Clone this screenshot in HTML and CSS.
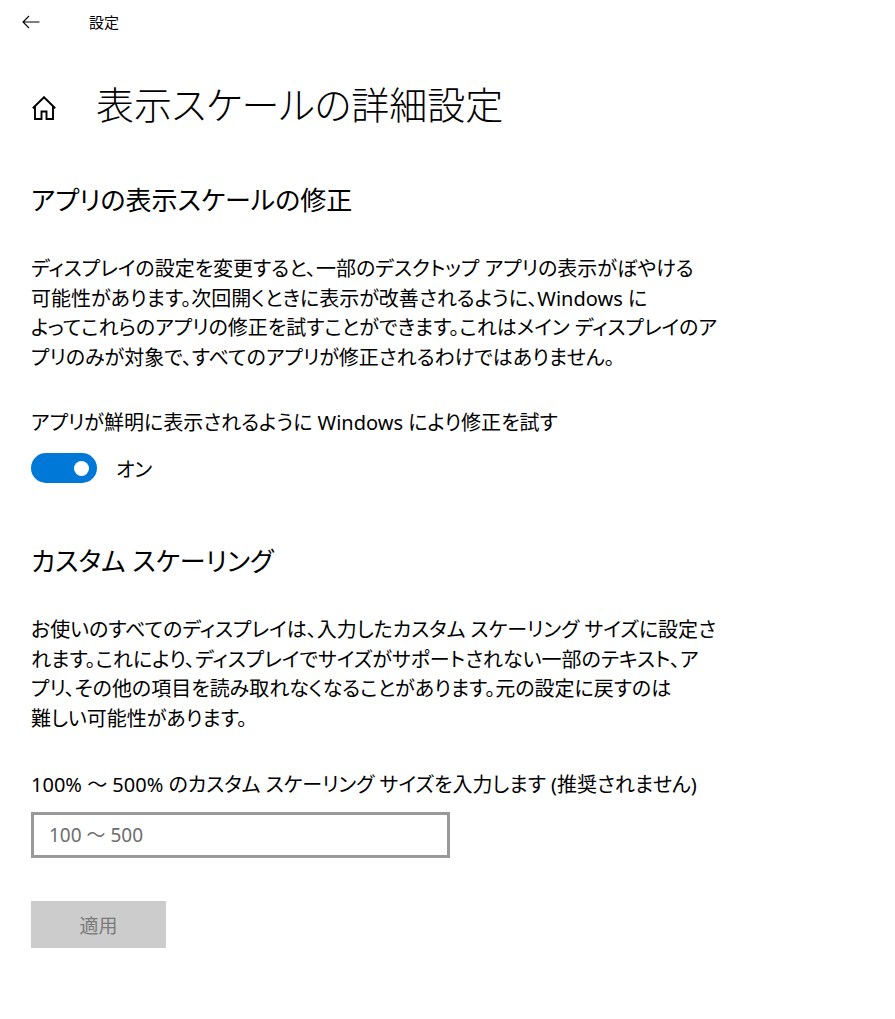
FILE: index.html
```html
<!DOCTYPE html>
<html lang="ja">
<head>
    <meta charset="UTF-8">
    <title>設定</title>
    <link rel="stylesheet" href="styles.css">
</head>
<body>
    <div class="topbar">
        <svg class="back-icon" width="18" height="14" viewBox="0 0 18 14">
            <path d="M17.5 7H1M7 1L1 7l6 6" fill="none" stroke="#000" stroke-width="1.1"/>
        </svg>
        <span class="app-name">設定</span>
    </div>

    <div class="page-title">
        <svg class="home-icon" width="24" height="24" viewBox="0 0 24 24">
            <path d="M0.8 12.2L12 1.2l11.2 11M3 10v13h6.5v-7.5h5V23H21V10" fill="none" stroke="#000" stroke-width="1.9" stroke-linejoin="miter"/>
        </svg>
        <h1>表示スケールの詳細設定</h1>
    </div>

    <div class="content">
        <h2 class="section-title first">アプリの表示スケールの修正</h2>
        <p class="desc">ディスプレイの設定を変更すると、一部のデスクトップ アプリの表示がぼやける<br>可能性があります。次回開くときに表示が改善されるように、Windows に<br>よってこれらのアプリの修正を試すことができます。これはメイン ディスプレイのア<br>プリのみが対象で、すべてのアプリが修正されるわけではありません。</p>

        <div class="field-label">アプリが鮮明に表示されるように Windows により修正を試す</div>
        <div class="toggle-row">
            <span class="toggle on"><span class="thumb"></span></span>
            <span class="toggle-text">オン</span>
        </div>

        <h2 class="section-title">カスタム スケーリング</h2>
        <p class="desc">お使いのすべてのディスプレイは、入力したカスタム スケーリング サイズに設定さ<br>れます。これにより、ディスプレイでサイズがサポートされない一部のテキスト、ア<br>プリ、その他の項目を読み取れなくなることがあります。元の設定に戻すのは<br>難しい可能性があります。</p>

        <div class="field-label second">100% ～ 500% のカスタム スケーリング サイズを入力します (推奨されません)</div>
        <input class="scale-input" type="text" placeholder="100 ～ 500">

        <button class="apply-btn" disabled>適用</button>
    </div>
</body>
</html>
```

FILE: styles.css
```css
body {
    margin: 0;
    background-color: #fff;
    color: #000;
    font-family: "Noto Sans", "Noto Sans CJK JP", sans-serif;
    font-feature-settings: "palt";
}
.topbar {
    height: 44px;
    display: flex;
    align-items: center;
}
.back-icon {
    margin-left: 22px;
}
.app-name {
    margin-left: 49px;
    font-size: 15px;
    line-height: 20px;
}
.page-title {
    display: flex;
    align-items: center;
    height: 50px;
    margin-top: 35px;
}
.home-icon {
    margin: 7px 0 0 32px;
}
h1 {
    margin: 0 0 0 40px;
    font-size: 38px;
    font-weight: 300;
    line-height: 50px;
}
.content {
    padding-left: 31px;
}
.section-title {
    margin: 60px 0 0;
    font-size: 26px;
    font-weight: 400;
    line-height: 36px;
}
.section-title.first {
    margin-top: 53px;
}
.desc {
    margin: 35px 0 0;
    font-size: 20px;
    line-height: 29.5px;
}
.section-title + .desc {
    margin-top: 36px;
}
.field-label {
    margin-top: 36px;
    font-size: 20px;
    line-height: 29px;
}
.field-label.second {
    margin-top: 37px;
}
.toggle-row {
    display: flex;
    align-items: center;
    margin-top: 16px;
    height: 30px;
}
.toggle {
    width: 66px;
    height: 30px;
    border-radius: 15px;
    background-color: #0078d7;
    position: relative;
}
.toggle .thumb {
    position: absolute;
    right: 8px;
    top: 7.5px;
    width: 15px;
    height: 15px;
    border-radius: 50%;
    background-color: #fff;
}
.toggle-text {
    margin-left: 19px;
    font-size: 20px;
}
.scale-input {
    display: block;
    box-sizing: border-box;
    width: 419px;
    height: 46px;
    margin-top: 13px;
    border: 3px solid #999;
    padding: 0 15px;
    font-family: inherit;
    font-size: 19px;
    outline: none;
}
.scale-input::placeholder {
    color: #6d6d6d;
}
.apply-btn {
    display: block;
    width: 135px;
    height: 47px;
    margin-top: 43px;
    border: none;
    background-color: #ccc;
    color: #7a7a7a;
    font-family: inherit;
    font-size: 19px;
}
```
